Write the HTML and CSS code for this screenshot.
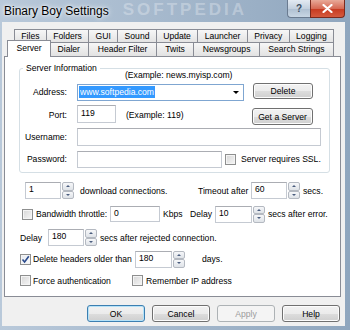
FILE: index.html
```html
<!DOCTYPE html>
<html lang="en">
<head>
  <meta charset="UTF-8" />
  <title>Binary Boy Settings</title>
  <link rel="stylesheet" href="styles.css">
</head>
<body>
  <div class="window">
    <div class="titlebar">
      <span class="title">Binary Boy Settings</span>
      <span class="watermark">SOFTPEDIA</span>
      <div class="caption">
        <span class="cap-help">?</span>
        <span class="cap-close">
          <svg width="11" height="9" viewBox="0 0 11 9"><path d="M1.5 1 L9.5 8 M9.5 1 L1.5 8" stroke="#fff" stroke-width="2.2" stroke-linecap="round"/></svg>
        </span>
      </div>
    </div>

    <div class="client">
      <div class="tabs">
        <div class="tab-row row1">
          <span class="tab">Files</span>
          <span class="tab">Folders</span>
          <span class="tab">GUI</span>
          <span class="tab">Sound</span>
          <span class="tab">Update</span>
          <span class="tab">Launcher</span>
          <span class="tab">Privacy</span>
          <span class="tab">Logging</span>
        </div>
        <div class="tab-row row2">
          <span class="tab active">Server</span>
          <span class="tab">Dialer</span>
          <span class="tab">Header Filter</span>
          <span class="tab">Twits</span>
          <span class="tab">Newsgroups</span>
          <span class="tab">Search Strings</span>
        </div>
      </div>

      <div class="panel">
        <fieldset class="group">
          <legend>Server Information</legend>
          <div class="example">(Example: news.myisp.com)</div>

          <div class="grow row-address">
            <label class="glabel">Address:</label>
            <div class="combo">
              <span class="sel">www.softpedia.com</span>
              <span class="combo-arrow"></span>
            </div>
            <button class="btn btn-delete">Delete</button>
          </div>

          <div class="grow row-port">
            <label class="glabel">Port:</label>
            <span class="input port">119</span>
            <span class="port-hint">(Example: 119)</span>
            <button class="btn btn-server">Get a Server</button>
          </div>

          <div class="grow row-user">
            <label class="glabel">Username:</label>
            <span class="input user"></span>
          </div>

          <div class="grow row-pass">
            <label class="glabel">Password:</label>
            <span class="input pass"></span>
            <span class="check ssl-check"></span>
            <span class="ssl-text">Server requires SSL.</span>
          </div>
        </fieldset>

        <div class="line row-a">
          <span class="spin w49"><span class="spin-box">1</span><span class="spin-btns"><span class="up"></span><span class="dn"></span></span></span>
          <span class="txt conn">download connections.</span>
          <span class="txt timeout">Timeout after</span>
          <span class="spin w49 gap3"><span class="spin-box">60</span><span class="spin-btns"><span class="up"></span><span class="dn"></span></span></span>
          <span class="txt gap3">secs.</span>
        </div>

        <div class="line row-b">
          <span class="check"></span>
          <span class="txt bw">Bandwidth throttle:</span>
          <span class="input kbps">0</span>
          <span class="txt kbps-unit">Kbps</span>
          <span class="txt delay-b">Delay</span>
          <span class="spin w50"><span class="spin-box">10</span><span class="spin-btns"><span class="up"></span><span class="dn"></span></span></span>
          <span class="txt gap3">secs after error.</span>
        </div>

        <div class="line row-c">
          <span class="txt delay-c">Delay</span>
          <span class="spin w49"><span class="spin-box">180</span><span class="spin-btns"><span class="up"></span><span class="dn"></span></span></span>
          <span class="txt gap3">secs after rejected connection.</span>
        </div>

        <div class="line row-d">
          <span class="check checked">
            <svg width="9" height="9" viewBox="0 0 9 9"><path d="M1.5 4.5 L3.6 7 L7.8 1.2" fill="none" stroke="#2a4a8c" stroke-width="1.6"/></svg>
          </span>
          <span class="txt older">Delete headers older than</span>
          <span class="spin w50"><span class="spin-box">180</span><span class="spin-btns"><span class="up"></span><span class="dn"></span></span></span>
          <span class="txt days">days.</span>
        </div>

        <div class="line row-e">
          <span class="check"></span>
          <span class="txt force">Force authentication</span>
          <span class="check"></span>
          <span class="txt gap3">Remember IP address</span>
        </div>
      </div>

      <div class="buttons">
        <button class="btn dlg default">OK</button>
        <button class="btn dlg">Cancel</button>
        <button class="btn dlg disabled">Apply</button>
        <button class="btn dlg">Help</button>
      </div>
    </div>
  </div>
</body>
</html>
```

FILE: styles.css
```css
body {
  margin: 0;
  font-family: 'Liberation Sans', Arial, sans-serif;
  font-size: 8.6px;
  color: #000;
  white-space: nowrap;
}

.window {
  width: 350px;
  height: 330px;
  box-sizing: border-box;
  padding: 0 5px 4px 2px;
  background: linear-gradient(90deg, #b9c9da 0%, #a6b9cd 45%, #8fa6be 100%);
  display: flex;
  flex-direction: column;
}

/* title bar */
.titlebar {
  height: 22px;
  display: flex;
  align-items: flex-start;
}

.title {
  font-size: 12px;
  line-height: 14px;
  margin: 4px 0 0 2px;
  text-shadow: 0 0 6px #fff, 0 0 3px #fff;
}

.watermark {
  font-size: 17px;
  font-weight: bold;
  letter-spacing: 3px;
  line-height: 20px;
  color: rgba(255, 255, 255, 0.3);
  margin: 0 0 0 14px;
}

.caption {
  display: flex;
  margin-left: auto;
}

.cap-help {
  width: 23px;
  height: 18px;
  box-sizing: border-box;
  border: 1px solid #6a7b90;
  border-right: none;
  border-top: none;
  border-radius: 0 0 0 4px;
  background: linear-gradient(#e3eaf2, #c3d0de 50%, #aebfd1 51%, #c8d6e4);
  color: #3d4d60;
  font-weight: bold;
  font-size: 10px;
  text-align: center;
  line-height: 17px;
}

.cap-close {
  width: 35px;
  height: 18px;
  box-sizing: border-box;
  border: 1px solid #7a2a1e;
  border-top: none;
  border-radius: 0 0 4px 0;
  background: linear-gradient(#e8a998, #d66a54 50%, #c7391f 51%, #d45a3e);
  display: flex;
  align-items: center;
  justify-content: center;
}

/* client area */
.client {
  flex: 1;
  background: #f0f0f0;
  display: flex;
  flex-direction: column;
}

.tabs {
  margin-top: 7px;
}

.tab-row {
  display: flex;
  height: 14px;
}

.row1 {
  margin-left: 12px;
  width: 320px;
}

.row2 {
  margin-left: 7px;
  width: 325px;
  margin-top: -1px;
  align-items: flex-end;
}

.tab {
  flex: 1 1 auto;
  box-sizing: border-box;
  height: 14px;
  margin-left: -1px;
  border: 1px solid #898c95;
  border-bottom: none;
  background: linear-gradient(#f7f7f7, #ececec 50%, #e2e2e2);
  text-align: center;
  line-height: 13px;
  padding: 0 4px;
}

.tab:first-child {
  margin-left: 0;
}

.tab.active {
  position: relative;
  z-index: 1;
  height: 17px;
  margin: -2px -2px -1px -2px;
  background: #fff;
  line-height: 14px;
}

.panel {
  margin-left: 2px;
  width: 337px;
  height: 241px;
  box-sizing: border-box;
  background: #fff;
  border: 1px solid #898c95;
}

/* group box */
.group {
  margin: 6px 0 0 14px;
  width: 311px;
  box-sizing: border-box;
  padding: 0 16px 4px 0;
  border: 1px solid #d5dfe5;
  border-radius: 3px;
  min-width: 0;
}

.group legend {
  padding: 0 3px;
  margin-left: 3px;
  line-height: 11px;
}

.example {
  margin-top: -4px;
  padding-left: 105px;
  line-height: 11px;
}

.grow {
  display: flex;
  align-items: center;
}

.glabel {
  width: 47px;
  margin-right: 10px;
  text-align: right;
  flex: none;
}

.row-address {
  margin-top: 2px;
  height: 17px;
}

.row-port {
  margin-top: 5px;
  height: 20px;
}

.row-user {
  margin-top: 3px;
  height: 18px;
}

.row-pass {
  margin-top: 4px;
  height: 18px;
}

.input {
  display: block;
  box-sizing: border-box;
  height: 18px;
  border: 1px solid #c5cad2;
  border-top-color: #abadb3;
  background: #fff;
  padding-left: 3px;
  line-height: 15px;
  flex: none;
}

.port {
  width: 39px;
  align-self: flex-start;
}

.port-hint {
  margin-left: 10px;
}

.user {
  width: 244px;
}

.pass {
  width: 145px;
  height: 17px;
}

.ssl-check {
  margin-left: 3px;
}

.ssl-text {
  margin-left: 5px;
}

.combo {
  width: 167px;
  height: 17px;
  box-sizing: border-box;
  border: 1px solid #7fa6d1;
  background: #fff;
  display: flex;
  align-items: center;
  padding-left: 1px;
  margin-top: 1px;
}

.sel {
  background: #3399ff;
  color: #fff;
  line-height: 12px;
  padding: 0 1px;
}

.combo-arrow {
  margin-left: auto;
  margin-right: 4px;
  width: 0;
  height: 0;
  border-left: 3px solid transparent;
  border-right: 3px solid transparent;
  border-top: 3px solid #000;
}

/* buttons */
.btn {
  font-family: inherit;
  font-size: 8.6px;
  color: #000;
  box-sizing: border-box;
  border: 1px solid #707070;
  border-radius: 3px;
  background: linear-gradient(#f2f2f2 0%, #ebebeb 50%, #dddddd 51%, #cfcfcf 100%);
  box-shadow: inset 0 0 0 1px #fcfcfc;
  padding: 0;
  height: 17px;
}

.btn-delete {
  margin-left: auto;
  width: 60px;
  height: 16px;
  align-self: flex-start;
}

.btn-server {
  margin-left: auto;
  width: 61px;
  align-self: flex-end;
}

/* rows below the group */
.line {
  display: flex;
  align-items: center;
}

.txt {
  flex: none;
}

.gap3 {
  margin-left: 3px;
}

.row-a {
  margin-top: 9px;
  height: 17px;
  padding-left: 20px;
}

.conn {
  margin-left: 6px;
  width: 118px;
}

.timeout {
  width: 50px;
  text-align: right;
}

.row-b {
  margin-top: 7px;
  height: 16px;
  padding-left: 17px;
}

.bw {
  margin-left: 3px;
  width: 74px;
}

.kbps {
  width: 50px;
  height: 16px;
  line-height: 13px;
}

.kbps-unit {
  margin-left: 3px;
  width: 27px;
}

.delay-b {
  width: 25px;
}

.row-c {
  margin-top: 7px;
  height: 17px;
  padding-left: 15px;
}

.delay-c {
  width: 28px;
}

.row-d {
  margin-top: 4px;
  height: 18px;
  padding-left: 15px;
}

.older {
  margin-left: 2px;
  width: 102px;
}

.days {
  margin-left: 17px;
}

.row-e {
  margin-top: 6px;
  height: 13px;
  padding-left: 15px;
}

.force {
  margin-left: 2px;
  width: 99px;
}

/* checkbox */
.check {
  display: flex;
  align-items: center;
  justify-content: center;
  width: 11px;
  height: 11px;
  box-sizing: border-box;
  border: 1px solid #8e8f8f;
  background: linear-gradient(135deg, #d6d6d6, #f6f6f6);
  box-shadow: inset 0 0 0 1px #f4f4f4;
  flex: none;
}

.check.checked {
  background: linear-gradient(135deg, #e4e8ee, #fafbfc);
}

/* spinner */
.spin {
  display: flex;
  height: 17px;
  flex: none;
}

.w49 {
  width: 49px;
}

.w50 {
  width: 50px;
}

.spin-box {
  flex: 1;
  box-sizing: border-box;
  border: 1px solid #c5cad2;
  border-top-color: #abadb3;
  background: #fff;
  padding-left: 3px;
  line-height: 13px;
}

.spin-btns {
  width: 12px;
  margin-left: 1px;
  display: flex;
  flex-direction: column;
}

.spin-btns span {
  flex: 1;
  box-sizing: border-box;
  border: 1px solid #b4b9c1;
  border-radius: 2px;
  background: linear-gradient(#f6f7f9, #dfe3e8);
  display: flex;
  align-items: center;
  justify-content: center;
}

.spin-btns .up::after,
.spin-btns .dn::after {
  content: "";
  width: 0;
  height: 0;
  border-left: 2px solid transparent;
  border-right: 2px solid transparent;
}

.spin-btns .up::after {
  border-bottom: 2px solid #4a5d7e;
}

.spin-btns .dn::after {
  border-top: 2px solid #4a5d7e;
}

/* dialog buttons */
.buttons {
  display: flex;
  gap: 7px;
  margin: 8px 0 0 85px;
}

.dlg {
  width: 58px;
  height: 17px;
}

.dlg.default {
  border-color: #3c7fb1;
  box-shadow: inset 0 0 0 1px #b5e2f8;
}

.dlg.disabled {
  border-color: #adb2b5;
  background: #f4f4f4;
  box-shadow: none;
  color: #9c9c9c;
}
```
